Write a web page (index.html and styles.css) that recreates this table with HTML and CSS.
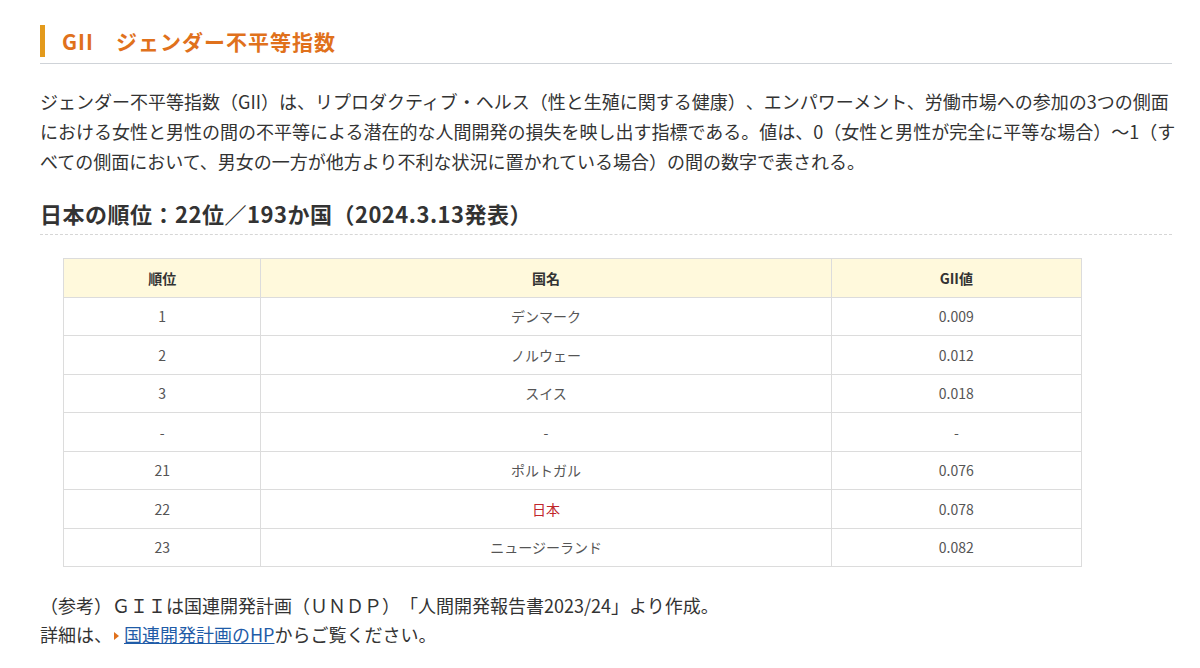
FILE: index.html
```html
<!DOCTYPE html>
<html lang="ja">
<head>
<meta charset="utf-8">
<title>GII ジェンダー不平等指数</title>
<link rel="stylesheet" href="styles.css">
</head>
<body>
<main class="content">
  <h2 class="title"><span class="title-text">GII　ジェンダー不平等指数</span></h2>
  <p class="lead">ジェンダー不平等指数（GII）は、リプロダクティブ・ヘルス（性と生殖に関する健康）、エンパワーメント、労働市場への参加の3つの側面における女性と男性の間の不平等による潜在的な人間開発の損失を映し出す指標である。値は、0（女性と男性が完全に平等な場合）～1（すべての側面において、男女の一方が他方より不利な状況に置かれている場合）の間の数字で表される。</p>
  <h3 class="subtitle">日本の順位：22位／193か国（2024.3.13発表）</h3>
  <table class="rank">
    <thead>
      <tr><th class="c1">順位</th><th class="c2">国名</th><th class="c3">GII値</th></tr>
    </thead>
    <tbody>
      <tr><td>1</td><td>デンマーク</td><td>0.009</td></tr>
      <tr><td>2</td><td>ノルウェー</td><td>0.012</td></tr>
      <tr><td>3</td><td>スイス</td><td>0.018</td></tr>
      <tr><td>-</td><td>-</td><td>-</td></tr>
      <tr><td>21</td><td>ポルトガル</td><td>0.076</td></tr>
      <tr><td>22</td><td class="japan">日本</td><td>0.078</td></tr>
      <tr><td>23</td><td>ニュージーランド</td><td>0.082</td></tr>
    </tbody>
  </table>
  <div class="note">
    <p>（参考）ＧＩＩは国連開発計画（ＵＮＤＰ）「人間開発報告書2023/24」より作成。</p>
    <p>詳細は、<a class="ext" href="#">国連開発計画のHP</a>からご覧ください。</p>
  </div>
</main>
</body>
</html>
```
FILE: styles.css
```css
html, body {
  margin: 0;
  padding: 0;
  background: #ffffff;
}
body {
  font-family: "Noto Sans CJK JP", "Noto Sans", sans-serif;
  color: #333333;
  font-size: 16px;
  text-spacing-trim: space-all;
}
.content {
  width: 1132px;
  margin-left: 40px;
  padding-top: 25px;
}
.title {
  margin: 0;
  padding-bottom: 6px;
  border-bottom: 1px solid #cfd3d8;
}
.title-text {
  display: block;
  border-left: 5px solid #e39a1c;
  padding-left: 17px;
  height: 32px;
  line-height: 32px;
  font-size: 21px;
  letter-spacing: 1px;
  font-weight: bold;
  color: #e0711c;
}
.lead {
  margin: 22px -9px 0 0;
  line-height: 30px;
  font-size: 18px;
  color: #333333;
}
.subtitle {
  margin: 22px 0 0;
  font-size: 22px;
  letter-spacing: 0.5px;
  font-weight: bold;
  line-height: 30px;
  padding-bottom: 6px;
  border-bottom: 1px dashed #d6d6d6;
  color: #333333;
}
.rank {
  margin: 23px 0 0 23px;
  width: 1019px;
  border-collapse: collapse;
  font-size: 14px;
}
.rank th, .rank td {
  border: 1px solid #dcdcdc;
  text-align: center;
  height: 37.5px;
  padding: 0;
  line-height: 20px;
}
.rank th {
  background: #fff9dc;
  font-weight: bold;
  color: #333333;
}
.rank td {
  color: #555555;
}
.rank .c1 { width: 197px; }
.rank .c2 { width: 571px; }
.rank .c3 { width: 250px; }
.rank td.japan {
  color: #c0262b;
}
.note {
  margin-top: 24px;
}
.note p {
  margin: 0;
  line-height: 29px;
  font-size: 18px;
  color: #333333;
}
.ext {
  color: #1f5ca8;
  text-decoration: underline;
}
.ext::before {
  content: "";
  display: inline-block;
  width: 0;
  height: 0;
  border-left: 5px solid #e0711c;
  border-top: 4px solid transparent;
  border-bottom: 4px solid transparent;
  margin: 0 5px 2px 2px;
  vertical-align: middle;
}
```
